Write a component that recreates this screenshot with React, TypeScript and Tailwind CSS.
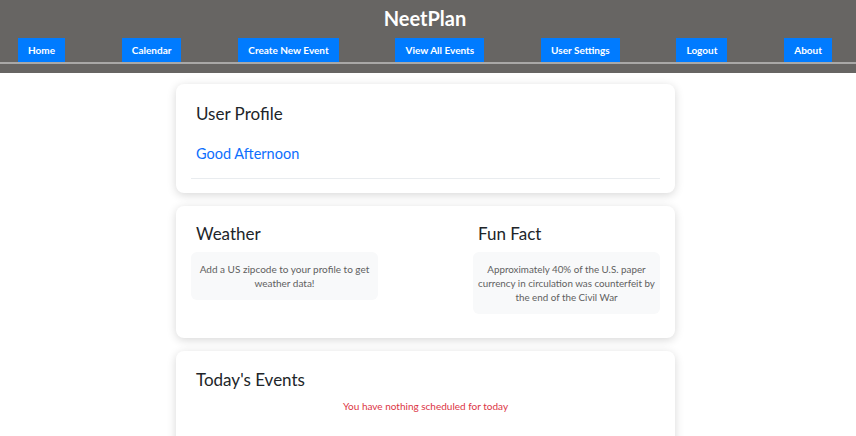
const navItems = [
  "Home",
  "Calendar",
  "Create New Event",
  "View All Events",
  "User Settings",
  "Logout",
  "About",
];

function Card({ className, children }: { className?: string; children: React.ReactNode }) {
  return (
    <div
      className={
        "w-[499px] ml-[176px] bg-white rounded-lg shadow-[0_2px_10px_rgba(0,0,0,0.16)] px-[15px] " +
        (className ?? "")
      }
    >
      {children}
    </div>
  );
}

export default function App() {
  return (
    <main
      className="min-h-screen bg-white text-[#212529]"
      style={{ fontFamily: '"Segoe UI", Lato, "Noto Sans", sans-serif' }}
    >
      <header className="bg-[#676563] h-[73px]">
        <h1 className="text-white text-[20px] font-bold text-center leading-[26px] pt-[5px] pr-[6px]">
          NeetPlan
        </h1>
        <nav className="mt-[7px] border-b-2 border-[#a9a8a7] flex justify-between pl-[18px] pr-[24px]">
          {navItems.map((item) => (
            <a
              key={item}
              href="#"
              className="bg-[#007bff] text-white text-[10px] font-bold h-[24px] px-[10px] flex items-center"
            >
              {item}
            </a>
          ))}
        </nav>
      </header>

      <section className="pt-[11px] flex flex-col gap-[13px]">
        <Card className="h-[109px] pt-[18px]">
          <h2 className="text-[17px] leading-[24px] pl-[5px]">User Profile</h2>
          <p className="text-[14.5px] leading-[20px] text-[#0d6efd] pl-[5px] mt-[18px]">
            Good Afternoon
          </p>
          <hr className="mt-[14px] border-[#e9ecef]" />
        </Card>

        <Card className="h-[132px] pt-[16px]">
          <div className="flex justify-between">
            <div className="w-[187px]">
              <h2 className="text-[17px] leading-[24px] pl-[5px]">Weather</h2>
              <div className="mt-[6px] bg-[#f8f9fa] rounded-md px-[8px] py-[10px] text-[10px] leading-[14px] text-[#5f5f5f] text-center">
                Add a US zipcode to your profile to get weather data!
              </div>
            </div>
            <div className="w-[187px]">
              <h2 className="text-[17px] leading-[24px] pl-[5px]">Fun Fact</h2>
              <div className="mt-[6px] bg-[#f8f9fa] rounded-md px-[3px] py-[10px] text-[9.8px] leading-[14px] text-[#5f5f5f] text-center">
                Approximately 40% of the U.S. paper currency in circulation was counterfeit by
                the end of the Civil War
              </div>
            </div>
          </div>
        </Card>

        <Card className="h-[100px] pt-[17px]">
          <h2 className="text-[17px] leading-[24px] pl-[5px]">Today's Events</h2>
          <p className="text-[10px] leading-[14px] text-[#dc3545] text-center mt-[7px]">
            You have nothing scheduled for today
          </p>
        </Card>
      </section>
    </main>
  );
}
